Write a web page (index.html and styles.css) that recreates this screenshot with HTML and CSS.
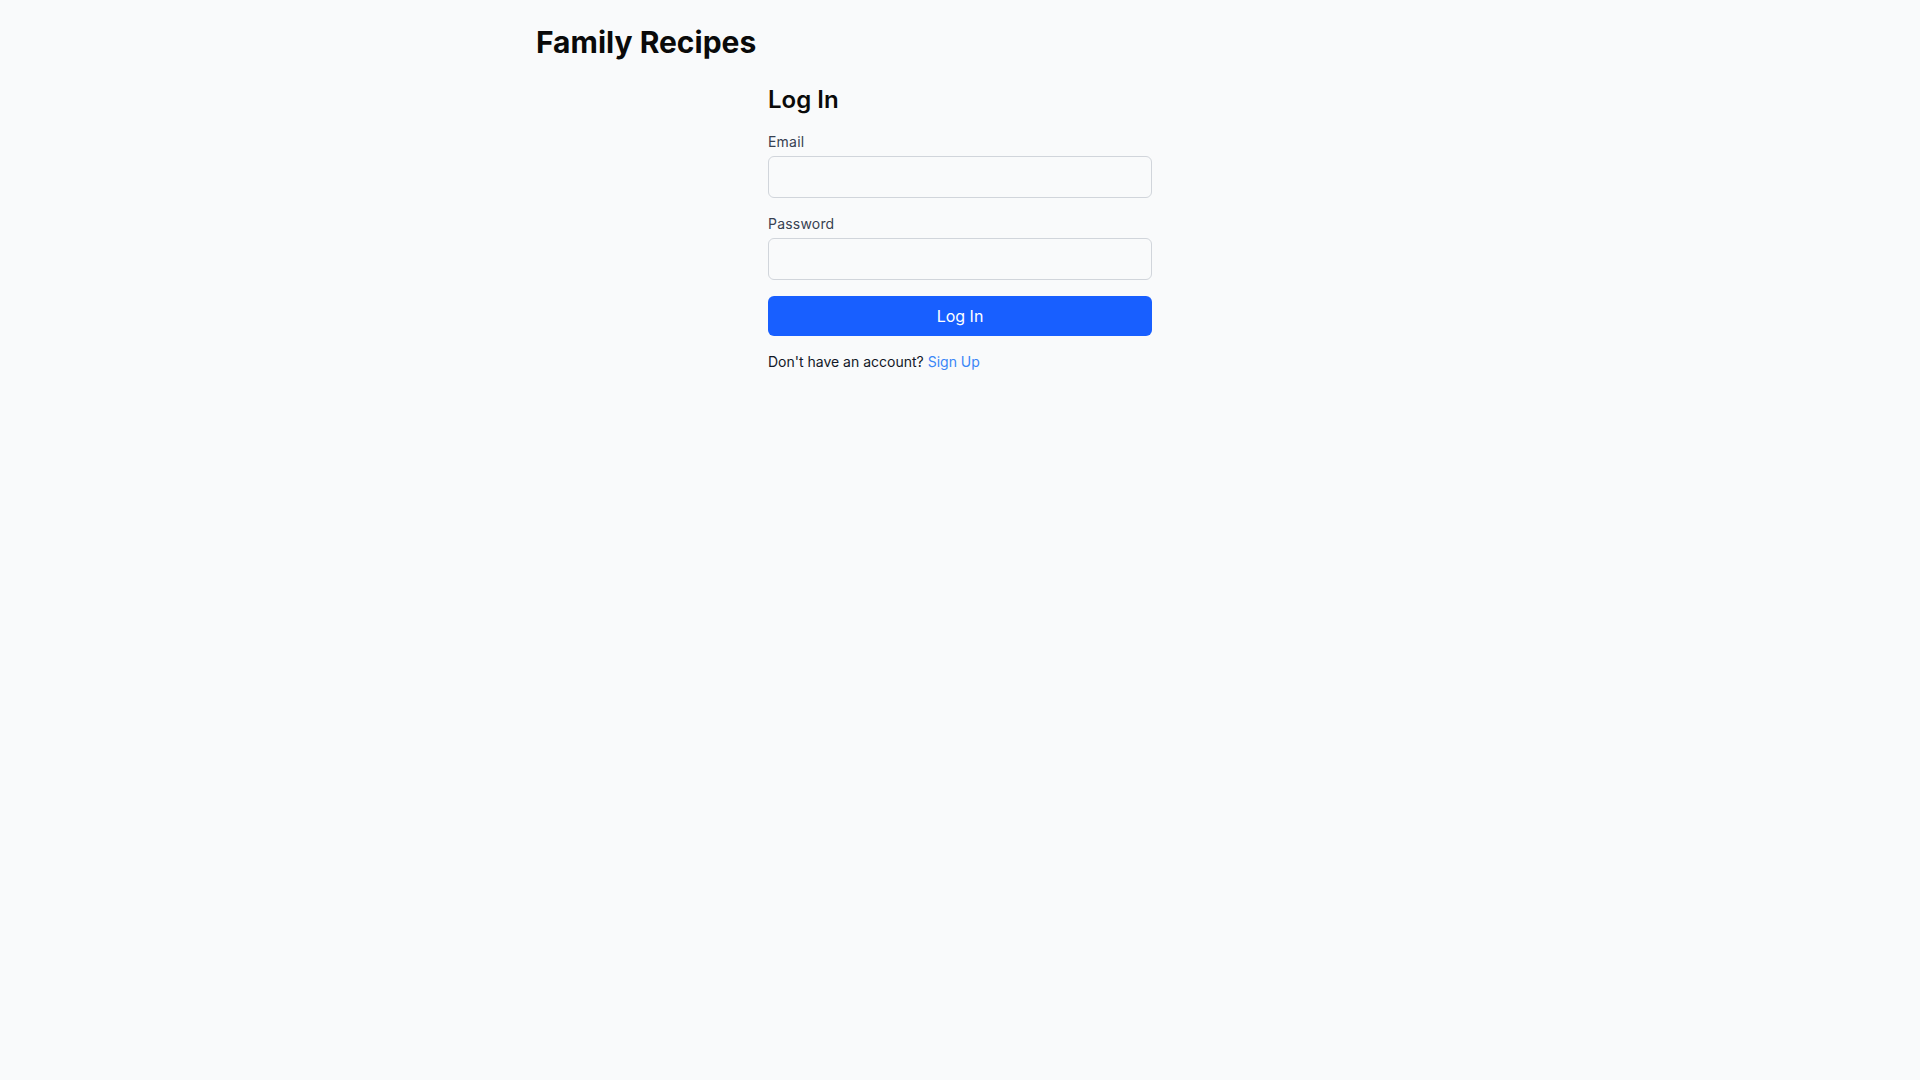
FILE: index.html
```html
<!DOCTYPE html>
<html lang="en">
<head>
  <meta charset="UTF-8">
  <meta name="viewport" content="width=device-width, initial-scale=1.0">
  <title>Family Recipes - Log In</title>
  <link rel="stylesheet" href="styles.css">
</head>
<body>
  <div class="page">
    <h1 class="site-title">Family Recipes</h1>

    <form class="login-form" onsubmit="event.preventDefault();">
      <h2 class="form-title">Log In</h2>
      <div class="field">
        <label for="email">Email</label>
        <input type="email" id="email" required>
      </div>
      <div class="field">
        <label for="password">Password</label>
        <input type="password" id="password" required>
      </div>
      <button type="submit" class="submit-btn">Log In</button>
      <p class="switch">Don't have an account? <a href="#">Sign Up</a></p>
    </form>
  </div>
</body>
</html>
```

FILE: styles.css
```css
body {
  font-family: Inter, "Noto Sans", Arial, sans-serif;
  margin: 0;
  padding: 0;
  background: #f9fafb;
  color: #111827;
}
.page {
  max-width: 896px;
  margin: 0 auto;
  padding: 24px;
  box-sizing: border-box;
}
.site-title {
  margin: 0 0 24px;
  font-size: 30px;
  line-height: 36px;
  font-weight: 700;
  color: #0a0a0a;
}
.login-form {
  width: 384px;
  margin: 0 auto;
  display: flex;
  flex-direction: column;
  gap: 16px;
}
.form-title {
  margin: 0;
  font-size: 24px;
  line-height: 32px;
  font-weight: 600;
  color: #0a0a0a;
}
.field {
  display: flex;
  flex-direction: column;
  gap: 4px;
}
.field label {
  font-size: 14px;
  line-height: 20px;
  font-weight: 400;
  letter-spacing: 0.2px;
  color: #374151;
}
.field input {
  height: 42px;
  box-sizing: border-box;
  padding: 8px 12px;
  font: inherit;
  font-size: 16px;
  border: 1px solid #d1d5db;
  border-radius: 6px;
  background: transparent;
}
.submit-btn {
  height: 40px;
  border: none;
  border-radius: 6px;
  background: #185fff;
  color: #fff;
  font: inherit;
  font-size: 16px;
  line-height: 24px;
  font-weight: 400;
  cursor: pointer;
}
.switch {
  margin: 0;
  font-size: 14px;
  line-height: 20px;
  color: #111827;
}
.switch a {
  color: #3b86f7;
  text-decoration: none;
}
```
